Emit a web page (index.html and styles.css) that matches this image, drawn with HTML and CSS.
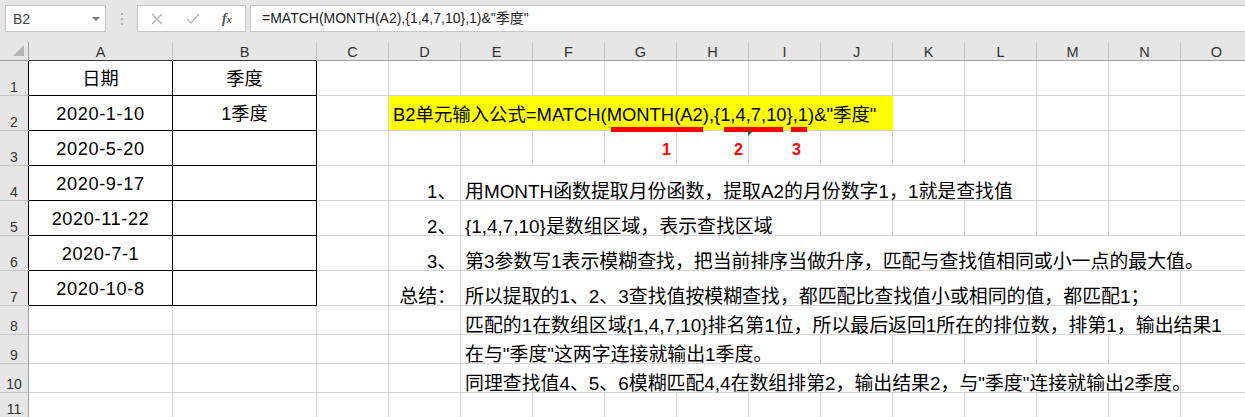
FILE: index.html
```html
<!DOCTYPE html>
<html lang="zh">
<head>
<meta charset="utf-8">
<title>MATCH 季度</title>
<link rel="stylesheet" href="styles.css">
</head>
<body>
<div class="toolbar">
  <div class="namebox"><span class="nb-text">B2</span><span class="nb-arrow"></span></div>
  <div class="vdots"><svg width="4" height="14" viewBox="0 0 4 14"><circle cx="2" cy="2" r="1.1"/><circle cx="2" cy="7" r="1.1"/><circle cx="2" cy="12" r="1.1"/></svg></div>
  <div class="fbtns">
    <svg class="ico" width="12" height="12" viewBox="0 0 12 12"><path d="M1 1 L11 11 M11 1 L1 11"/></svg>
    <svg class="ico" width="14" height="11" viewBox="0 0 14 11"><path d="M1 6 L5 10 L13 1"/></svg>
    <span class="fx">f<span class="fx-x">x</span></span>
  </div>
  <div class="formula">=MATCH(MONTH(A2),{1,4,7,10},1)&amp;"季度"</div>
</div>

<div class="sheet">
  <div class="grid">
    <!-- column header -->
    <div class="corner"><svg width="12" height="12" viewBox="0 0 12 12"><polygon points="11,0 11,11 0,11"/></svg></div>
    <div class="ch chb">A</div><div class="ch chb">B</div><div class="ch">C</div><div class="ch">D</div><div class="ch">E</div><div class="ch">F</div><div class="ch">G</div><div class="ch">H</div><div class="ch">I</div><div class="ch">J</div><div class="ch">K</div><div class="ch">L</div><div class="ch">M</div><div class="ch">N</div><div class="ch">O</div>

    <!-- row 1 -->
    <div class="rh rht">1</div>
    <div class="c tb tba mid">日期</div><div class="c tb mid">季度</div>
    <div class="c"></div><div class="c"></div><div class="c"></div><div class="c"></div><div class="c"></div><div class="c"></div><div class="c"></div><div class="c"></div><div class="c"></div><div class="c"></div><div class="c"></div><div class="c"></div><div class="c"></div>

    <!-- row 2 -->
    <div class="rh rht">2</div>
    <div class="c tb tba mid date">2020-1-10</div><div class="c tb mid">1季度</div>
    <div class="c"></div>
    <div class="c yellow span7">B2单元输入公式=MATCH(MONTH(A2),{1,4,7,10},1)&amp;"季度"</div>
    <div class="c"></div><div class="c"></div><div class="c"></div><div class="c"></div><div class="c"></div>

    <!-- row 3 -->
    <div class="rh rht">3</div>
    <div class="c tb tba mid date">2020-5-20</div><div class="c tb mid"></div>
    <div class="c"></div><div class="c"></div><div class="c"></div><div class="c"></div><div class="c"></div><div class="c"></div><div class="c"></div><div class="c"></div><div class="c"></div><div class="c"></div><div class="c"></div><div class="c"></div><div class="c"></div>

    <!-- row 4 -->
    <div class="rh rht">4</div>
    <div class="c tb tba mid date">2020-9-17</div><div class="c tb mid"></div>
    <div class="c"></div>
    <div class="c right">1、</div>
    <div class="c txt span8">用MONTH函数提取月份函数，提取A2的月份数字1，1就是查找值</div>
    <div class="c"></div><div class="c"></div><div class="c"></div>

    <!-- row 5 -->
    <div class="rh rht">5</div>
    <div class="c tb tba mid date">2020-11-22</div><div class="c tb mid"></div>
    <div class="c"></div>
    <div class="c right">2、</div>
    <div class="c txt span5">{1,4,7,10}是数组区域，表示查找区域</div>
    <div class="c"></div><div class="c"></div><div class="c"></div><div class="c"></div><div class="c"></div><div class="c"></div>

    <!-- row 6 -->
    <div class="rh rht">6</div>
    <div class="c tb tba mid date">2020-7-1</div><div class="c tb mid"></div>
    <div class="c"></div>
    <div class="c right">3、</div>
    <div class="c txt span11">第3参数写1表示模糊查找，把当前排序当做升序，匹配与查找值相同或小一点的最大值。</div>

    <!-- row 7 -->
    <div class="rh rht">7</div>
    <div class="c tb tba mid date">2020-10-8</div><div class="c tb mid"></div>
    <div class="c"></div>
    <div class="c right txt">总结：</div>
    <div class="c txt span10">所以提取的1、2、3查找值按模糊查找，都匹配比查找值小或相同的值，都匹配1；</div>
    <div class="c"></div>

    <!-- row 8 -->
    <div class="rh">8</div>
    <div class="c"></div><div class="c"></div><div class="c"></div><div class="c"></div>
    <div class="c txt span11">匹配的1在数组区域{1,4,7,10}排名第1位，所以最后返回1所在的排位数，排第1，输出结果1</div>

    <!-- row 9 -->
    <div class="rh">9</div>
    <div class="c"></div><div class="c"></div><div class="c"></div><div class="c"></div>
    <div class="c txt span5">在与"季度"这两字连接就输出1季度。</div>
    <div class="c"></div><div class="c"></div><div class="c"></div><div class="c"></div><div class="c"></div><div class="c"></div>

    <!-- row 10 -->
    <div class="rh">10</div>
    <div class="c"></div><div class="c"></div><div class="c"></div><div class="c"></div>
    <div class="c txt span10">同理查找值4、5、6模糊匹配4,4在数组排第2，输出结果2，与"季度"连接就输出2季度。</div>
    <div class="c"></div>

    <!-- row 11 -->
    <div class="rh">11</div>
    <div class="c"></div><div class="c"></div><div class="c"></div><div class="c"></div><div class="c"></div><div class="c"></div><div class="c"></div><div class="c"></div><div class="c"></div><div class="c"></div><div class="c"></div><div class="c"></div><div class="c"></div><div class="c"></div><div class="c"></div>
  </div>

  <div class="uline ul1"></div>
  <div class="uline ul2"></div>
  <div class="uline ul3"></div>
  <div class="rnum rn1">1</div>
  <div class="rnum rn2">2</div>
  <div class="rnum rn3">3</div>
  <div class="errtri"></div>
</div>
</body>
</html>
```

FILE: styles.css
```css
html, body {
  margin: 0;
  padding: 0;
  background: #ffffff;
  overflow: hidden;
}
body {
  width: 1245px;
  height: 417px;
  font-family: "Liberation Sans", "Noto Sans CJK SC", sans-serif;
  color: #000;
}

/* ---------- formula bar ---------- */
.toolbar {
  height: 42px;
  background: #e6e6e6;
  box-sizing: border-box;
  padding: 5px 0 0 5px;
  display: flex;
  align-items: flex-start;
}
.namebox {
  width: 101px;
  height: 27px;
  box-sizing: border-box;
  background: #fff;
  border: 1px solid #c6c6c6;
  display: flex;
  align-items: center;
  justify-content: space-between;
  padding: 0 5px 0 7px;
}
.nb-text {
  font-size: 14px;
  color: #444;
}
.nb-arrow {
  width: 0;
  height: 0;
  border-left: 4px solid transparent;
  border-right: 4px solid transparent;
  border-top: 4px solid #7a7a7a;
  margin-top: 1px;
}
.vdots {
  width: 31px;
  height: 27px;
  display: flex;
  align-items: center;
  justify-content: center;
}
.vdots svg {
  fill: #a6a6a6;
}
.fbtns {
  width: 109px;
  height: 27px;
  box-sizing: border-box;
  background: #fff;
  border: 1px solid #c6c6c6;
  display: flex;
  align-items: center;
  padding-left: 13px;
  gap: 23px;
}
.ico path {
  fill: none;
  stroke: #b5b5b5;
  stroke-width: 1.4;
}
.fx {
  font-family: "Liberation Serif", serif;
  font-style: italic;
  font-weight: bold;
  font-size: 14px;
  color: #555;
  margin-left: -1px;
}
.fx-x {
  font-size: 10px;
}
.formula {
  margin-left: 4px;
  flex: 1;
  height: 27px;
  box-sizing: border-box;
  background: #fff;
  border: 1px solid #c6c6c6;
  border-right: none;
  font-size: 14px;
  line-height: 25px;
  padding-left: 11px;
  color: #222;
  white-space: nowrap;
}

/* ---------- sheet ---------- */
.sheet {
  position: relative;
}
.grid {
  display: grid;
  grid-template-columns: 29px 144px 144px repeat(13, 72px);
  grid-template-rows: 19px repeat(7, 35px) repeat(3, 29px) 25px;
}
.corner {
  background: #e6e6e6;
  border-right: 1px solid #9f9f9f;
  border-bottom: 1px solid #9f9f9f;
  box-sizing: border-box;
  display: flex;
  align-items: flex-end;
  justify-content: flex-end;
  padding: 0 3px 3px 0;
}
.corner svg {
  fill: #b4b4b4;
}
.ch {
  background: #e6e6e6;
  border-right: 1px solid #c6c6c6;
  border-bottom: 1px solid #9f9f9f;
  box-sizing: border-box;
  font-size: 14.5px;
  color: #333;
  display: flex;
  align-items: center;
  justify-content: center;
  padding-top: 2px;
}
.chb {
  border-bottom-color: #3a3a3a;
}
.rh {
  background: #e6e6e6;
  border-right: 1px solid #9f9f9f;
  border-bottom: 1px solid #c6c6c6;
  box-sizing: border-box;
  font-size: 14px;
  line-height: 14px;
  color: #333;
  display: flex;
  align-items: flex-end;
  justify-content: center;
  padding-bottom: 1px;
}
.rht {
  border-right-color: #000;
}

.c {
  border-right: 1px solid #d4d4d4;
  border-bottom: 1px solid #d4d4d4;
  box-sizing: border-box;
  background: #fff;
  display: flex;
  align-items: flex-end;
  padding: 0 4px;
  font-size: 18.6px;
  line-height: 16px;
  white-space: nowrap;
  overflow: visible;
}
.txt {
  font-size: 18.9px;
}
.right {
  justify-content: flex-end;
}
.tb {
  border-right-color: #000;
  border-bottom-color: #000;
  font-size: 18.2px;
}
.mid {
  align-items: center;
  justify-content: center;
  line-height: 20px;
  padding-top: 2px;
}
.date {
  letter-spacing: 0.6px;
}
.yellow {
  background: #ffff00;
  border-right-color: #ffff00;
  align-items: center;
  line-height: 20px;
  padding-top: 3px;
  padding-left: 4px;
  font-size: 18.4px;
}
.span5 { grid-column: span 5; }
.span7 { grid-column: span 7; }
.span8 { grid-column: span 8; }
.span10 { grid-column: span 10; }
.span11 { grid-column: span 11; }

/* ---------- annotations ---------- */
.uline {
  position: absolute;
  top: 85px;
  height: 5px;
  background: #ff0000;
}
.ul1 { left: 611px; width: 92px; }
.ul2 { left: 724px; width: 59px; }
.ul3 { left: 791px; width: 16px; }
.rnum {
  position: absolute;
  top: 100px;
  font-size: 16px;
  line-height: 16px;
  font-weight: bold;
  color: #ff0000;
}
.rn1 { left: 662px; }
.rn2 { left: 734px; }
.rn3 { left: 792px; }
.errtri {
  position: absolute;
  left: 748px;
  top: 89px;
  width: 0;
  height: 0;
  border-top: 5px solid #1f5e35;
  border-right: 5px solid transparent;
}
```
